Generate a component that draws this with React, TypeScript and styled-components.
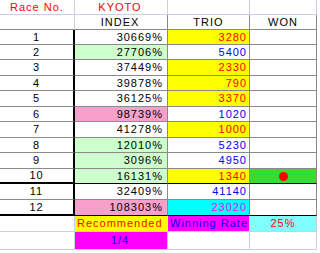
import React from 'react';
import styled, { createGlobalStyle } from 'styled-components';

const GRID = '#c9d0e0';
const DARK = '#8a8a8a';
const BLACK = '#000';

const YELLOW = '#ffff00';
const LGREEN = '#ccffcc';
const PINK = '#f7a0cc';
const CYAN = '#00ffff';
const LCYAN = '#80ffff';
const MAGENTA = '#ff00ff';
const GREEN = '#33dd33';
const RED = '#ff0000';
const BLUE = '#0000ff';

const COLS = [75, 93, 82, 67];

const GlobalStyle = createGlobalStyle`
	html, body {
		margin: 0;
		padding: 0;
		background: #fff;
	}
	body {
		font-family: "Liberation Sans", Arial, sans-serif;
		font-size: 11px;
	}
`;

const Sheet = styled.div`
	display: flex;
	flex-direction: column;
	width: 320px;
	height: 253px;
	overflow: hidden;
	background: #fff;
`;

const Row = styled.div<{ $h: number }>`
	display: flex;
	height: ${(p) => p.$h}px;
`;

const Cell = styled.div<{
	$col: number;
	$bg?: string;
	$fg?: string;
	$align?: 'left' | 'center' | 'right';
	$r?: string;
	$b?: string;
}>`
	box-sizing: border-box;
	display: flex;
	align-items: center;
	justify-content: ${(p) =>
		p.$align === 'right' ? 'flex-end' : p.$align === 'left' ? 'flex-start' : 'center'};
	width: ${(p) => COLS[p.$col]}px;
	height: 100%;
	padding: 0 ${(p) => (p.$col === 1 ? 4 : 2)}px 0 2px;
	background: ${(p) => p.$bg || '#fff'};
	color: ${(p) => p.$fg || '#000'};
	border-right: ${(p) => p.$r || `1px solid ${GRID}`};
	border-bottom: ${(p) => p.$b || `1px solid ${GRID}`};
	letter-spacing: 1px;
	white-space: nowrap;
	line-height: 1;
`;

const Dot = styled.span`
	display: block;
	width: 9px;
	height: 9px;
	border-radius: 50%;
	background: ${RED};
`;

type Race = {
	no: number;
	index: string;
	indexBg?: string;
	trio: string;
	trioBg?: string;
	trioFg: string;
	won?: boolean;
};

const races: Race[] = [
	{ no: 1, index: '30669%', trio: '3280', trioBg: YELLOW, trioFg: RED },
	{ no: 2, index: '27706%', indexBg: LGREEN, trio: '5400', trioFg: BLUE },
	{ no: 3, index: '37449%', trio: '2330', trioBg: YELLOW, trioFg: RED },
	{ no: 4, index: '39878%', trio: '790', trioBg: YELLOW, trioFg: RED },
	{ no: 5, index: '36125%', trio: '3370', trioBg: YELLOW, trioFg: RED },
	{ no: 6, index: '98739%', indexBg: PINK, trio: '1020', trioFg: BLUE },
	{ no: 7, index: '41278%', trio: '1000', trioBg: YELLOW, trioFg: RED },
	{ no: 8, index: '12010%', indexBg: LGREEN, trio: '5230', trioFg: BLUE },
	{ no: 9, index: '3096%', indexBg: LGREEN, trio: '4950', trioFg: BLUE },
	{ no: 10, index: '16131%', indexBg: LGREEN, trio: '1340', trioBg: YELLOW, trioFg: RED, won: true },
	{ no: 11, index: '32409%', trio: '41140', trioFg: BLUE },
	{ no: 12, index: '108303%', indexBg: PINK, trio: '23020', trioBg: CYAN, trioFg: MAGENTA },
];

const dataHeights = [15, 15, 16, 15, 16, 15, 16, 15, 16, 15, 16, 16];

const App: React.FC = () => {
	return (
		<React.Fragment>
			<GlobalStyle />
			<Sheet>
				<Row $h={15}>
					<Cell $col={0} $fg={RED}>Race No.</Cell>
					<Cell $col={1} $fg={RED} $align="center">KYOTO</Cell>
					<Cell $col={2} />
					<Cell $col={3} />
				</Row>
				<Row $h={15}>
					<Cell $col={0} $b={`1px solid ${DARK}`} />
					<Cell $col={1} $align="center" $r={`1px solid ${DARK}`} $b={`1px solid ${DARK}`}>
						INDEX
					</Cell>
					<Cell $col={2} $align="center" $r={`1px solid ${DARK}`} $b={`1px solid ${DARK}`}>
						TRIO
					</Cell>
					<Cell $col={3} $align="center" $r={`1px solid ${DARK}`} $b={`1px solid ${DARK}`}>
						WON
					</Cell>
				</Row>
				{races.map((r, i) => {
					const strong = r.no === 10 || r.no === 12;
					const bottom = strong ? `1px solid ${BLACK}` : `1px solid ${DARK}`;
					return (
						<Row key={r.no} $h={dataHeights[i]}>
							<Cell
								$col={0}
								$r={`2px solid ${BLACK}`}
								$b={strong ? `2px solid ${BLACK}` : `1px solid ${DARK}`}
							>
								{r.no}
							</Cell>
							<Cell $col={1} $align="right" $bg={r.indexBg} $r={`1px solid ${DARK}`} $b={bottom}>
								{r.index}
							</Cell>
							<Cell
								$col={2}
								$align="right"
								$bg={r.trioBg}
								$fg={r.trioFg}
								$r={`1px solid ${DARK}`}
								$b={bottom}
							>
								{r.trio}
							</Cell>
							<Cell $col={3} $bg={r.won ? GREEN : undefined} $r={`1px solid ${DARK}`} $b={bottom}>
								{r.won && <Dot />}
							</Cell>
						</Row>
					);
				})}
				<Row $h={16}>
					<Cell $col={0} />
					<Cell $col={1} $bg={YELLOW} $fg={RED} $align="left" $r="none">
						Recommended
					</Cell>
					<Cell $col={2} $bg={MAGENTA} $fg={BLUE} $align="left">
						Winning Rate
					</Cell>
					<Cell $col={3} $bg={LCYAN} $fg={RED}>
						25%
					</Cell>
				</Row>
				<Row $h={18}>
					<Cell $col={0} />
					<Cell $col={1} $bg={MAGENTA} $fg={BLUE}>
						1/4
					</Cell>
					<Cell $col={2} />
					<Cell $col={3} />
				</Row>
			</Sheet>
		</React.Fragment>
	);
};

export default App;
